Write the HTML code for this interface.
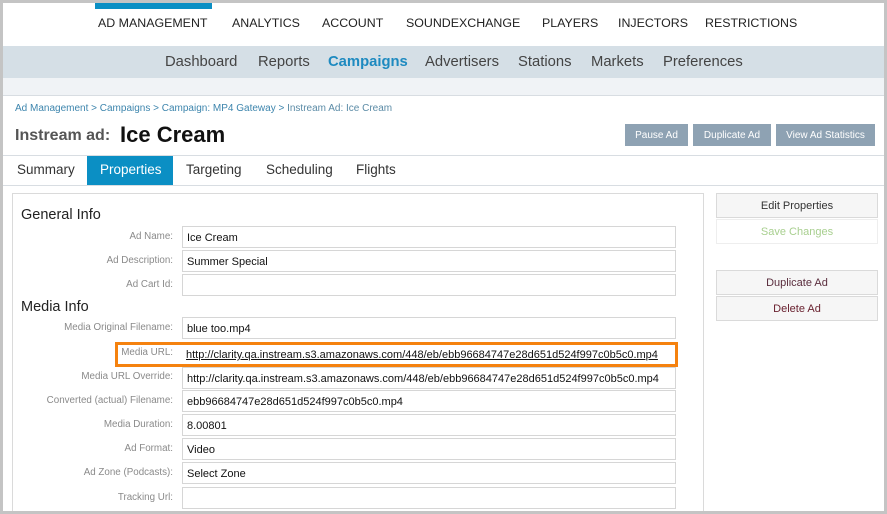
<!DOCTYPE html>
<html><head><style>
*{margin:0;padding:0;box-sizing:border-box}
body{width:887px;height:514px;overflow:hidden;background:#c4c4c4;font-family:"Liberation Sans",sans-serif;position:relative}
.a{position:absolute;white-space:nowrap}
#pg{position:absolute;left:3px;top:3px;width:881px;height:508px;background:#fff;overflow:hidden}
.nav{font-size:12.4px;color:#222;top:13px}
.sub{font-size:14.8px;color:#444;top:51px}
.btn{background:#8ea2b3;color:#fff;font-size:10px;text-align:center;line-height:22px;padding-top:1px;top:121px;height:22px}
.tab{font-size:13.5px;color:#333;top:159px}
.lbl{font-size:9.8px;color:#8a8a8a;right:711px;text-align:right}
.in{left:179px;width:494px;height:22px;border:1px solid #d6d6d6;font-size:11px;color:#111;padding-left:4px;line-height:22px}
.rb{left:713px;width:162px;height:25px;border:1px solid #dadada;background:#f6f6f6;font-size:11px;text-align:center;line-height:25px}
</style></head><body><div id="pg">
<div class="a" style="left:92px;top:0;width:117px;height:6px;background:#0b8fc4"></div>
<div class="a nav" style="left:95px">AD MANAGEMENT</div>
<div class="a nav" style="left:229px">ANALYTICS</div>
<div class="a nav" style="left:319px">ACCOUNT</div>
<div class="a nav" style="left:403px">SOUNDEXCHANGE</div>
<div class="a nav" style="left:539px">PLAYERS</div>
<div class="a nav" style="left:615px">INJECTORS</div>
<div class="a nav" style="left:702px">RESTRICTIONS</div>
<div class="a" style="left:0;top:43px;width:881px;height:32px;background:#d5dfe6"></div>
<div class="a sub" style="left:162px">Dashboard</div>
<div class="a sub" style="left:255px">Reports</div>
<div class="a sub" style="left:325px;color:#1e8ac0;font-weight:bold">Campaigns</div>
<div class="a sub" style="left:422px">Advertisers</div>
<div class="a sub" style="left:515px">Stations</div>
<div class="a sub" style="left:588px">Markets</div>
<div class="a sub" style="left:660px">Preferences</div>
<div class="a" style="left:0;top:75px;width:881px;height:18px;background:#f0f3f6;border-bottom:1px solid #d8dde2"></div>
<div class="a" style="left:12px;top:100px;font-size:10px;color:#3d85ad">Ad Management &gt; Campaigns &gt; Campaign: MP4 Gateway &gt; <span style="color:#5b8ba6">Instream Ad: Ice Cream</span></div>
<div class="a" style="left:12px;top:124px;font-size:16px;font-weight:bold;color:#555">Instream ad:</div>
<div class="a" style="left:117px;top:119px;font-size:22px;font-weight:bold;color:#111">Ice Cream</div>
<div class="a btn" style="left:622px;width:63px">Pause Ad</div>
<div class="a btn" style="left:690px;width:78px">Duplicate Ad</div>
<div class="a btn" style="left:773px;width:99px">View Ad Statistics</div>
<div class="a" style="left:0;top:152px;width:881px;height:1px;background:#d8dde2"></div>
<div class="a" style="left:0;top:182px;width:881px;height:1px;background:#d8dde2"></div>
<div class="a" style="left:84px;top:153px;width:86px;height:29px;background:#0b8fc4"></div>
<div class="a tab" style="left:14px">Summary</div>
<div class="a tab" style="left:97px;color:#fff">Properties</div>
<div class="a tab" style="left:183px">Targeting</div>
<div class="a tab" style="left:263px">Scheduling</div>
<div class="a tab" style="left:353px">Flights</div>
<div class="a" style="left:9px;top:190px;width:692px;height:330px;border:1px solid #dadada"></div>
<div class="a" style="left:18px;top:204px;font-size:14.5px;color:#222">General Info</div>
<div class="a" style="left:18px;top:296px;font-size:14.5px;color:#222">Media Info</div>
<div class="a lbl" style="top:228px">Ad Name:</div><div class="a in" style="top:223px">Ice Cream</div>
<div class="a lbl" style="top:252px">Ad Description:</div><div class="a in" style="top:247px">Summer Special</div>
<div class="a lbl" style="top:276px">Ad Cart Id:</div><div class="a in" style="top:271px"></div>
<div class="a lbl" style="top:319px">Media Original Filename:</div><div class="a in" style="top:314px">blue too.mp4</div>
<div class="a" style="left:112px;top:339px;width:563px;height:25px;border:3px solid #f5820f"></div>
<div class="a lbl" style="top:344px">Media URL:</div><div class="a" style="left:183px;top:346px;width:490px;overflow:hidden;font-size:11px;text-decoration:underline;color:#111">http://clarity.qa.instream.s3.amazonaws.com/448/eb/ebb96684747e28d651d524f997c0b5c0.mp4</div>
<div class="a lbl" style="top:368px">Media URL Override:</div><div class="a in" style="top:364px;overflow:hidden">http://clarity.qa.instream.s3.amazonaws.com/448/eb/ebb96684747e28d651d524f997c0b5c0.mp4</div>
<div class="a lbl" style="top:392px">Converted (actual) Filename:</div><div class="a in" style="top:387px">ebb96684747e28d651d524f997c0b5c0.mp4</div>
<div class="a lbl" style="top:416px">Media Duration:</div><div class="a in" style="top:411px">8.00801</div>
<div class="a lbl" style="top:440px">Ad Format:</div><div class="a in" style="top:435px">Video</div>
<div class="a lbl" style="top:464px">Ad Zone (Podcasts):</div><div class="a in" style="top:459px">Select Zone</div>
<div class="a lbl" style="top:489px">Tracking Url:</div><div class="a in" style="top:484px"></div>
<div class="a rb" style="top:190px;color:#333">Edit Properties</div>
<div class="a rb" style="top:216px;color:#a8cf8f;background:#fff;border-color:#eee">Save Changes</div>
<div class="a rb" style="top:267px;color:#5a2d3d">Duplicate Ad</div>
<div class="a rb" style="top:293px;color:#6a2230">Delete Ad</div>
</div></body></html>
